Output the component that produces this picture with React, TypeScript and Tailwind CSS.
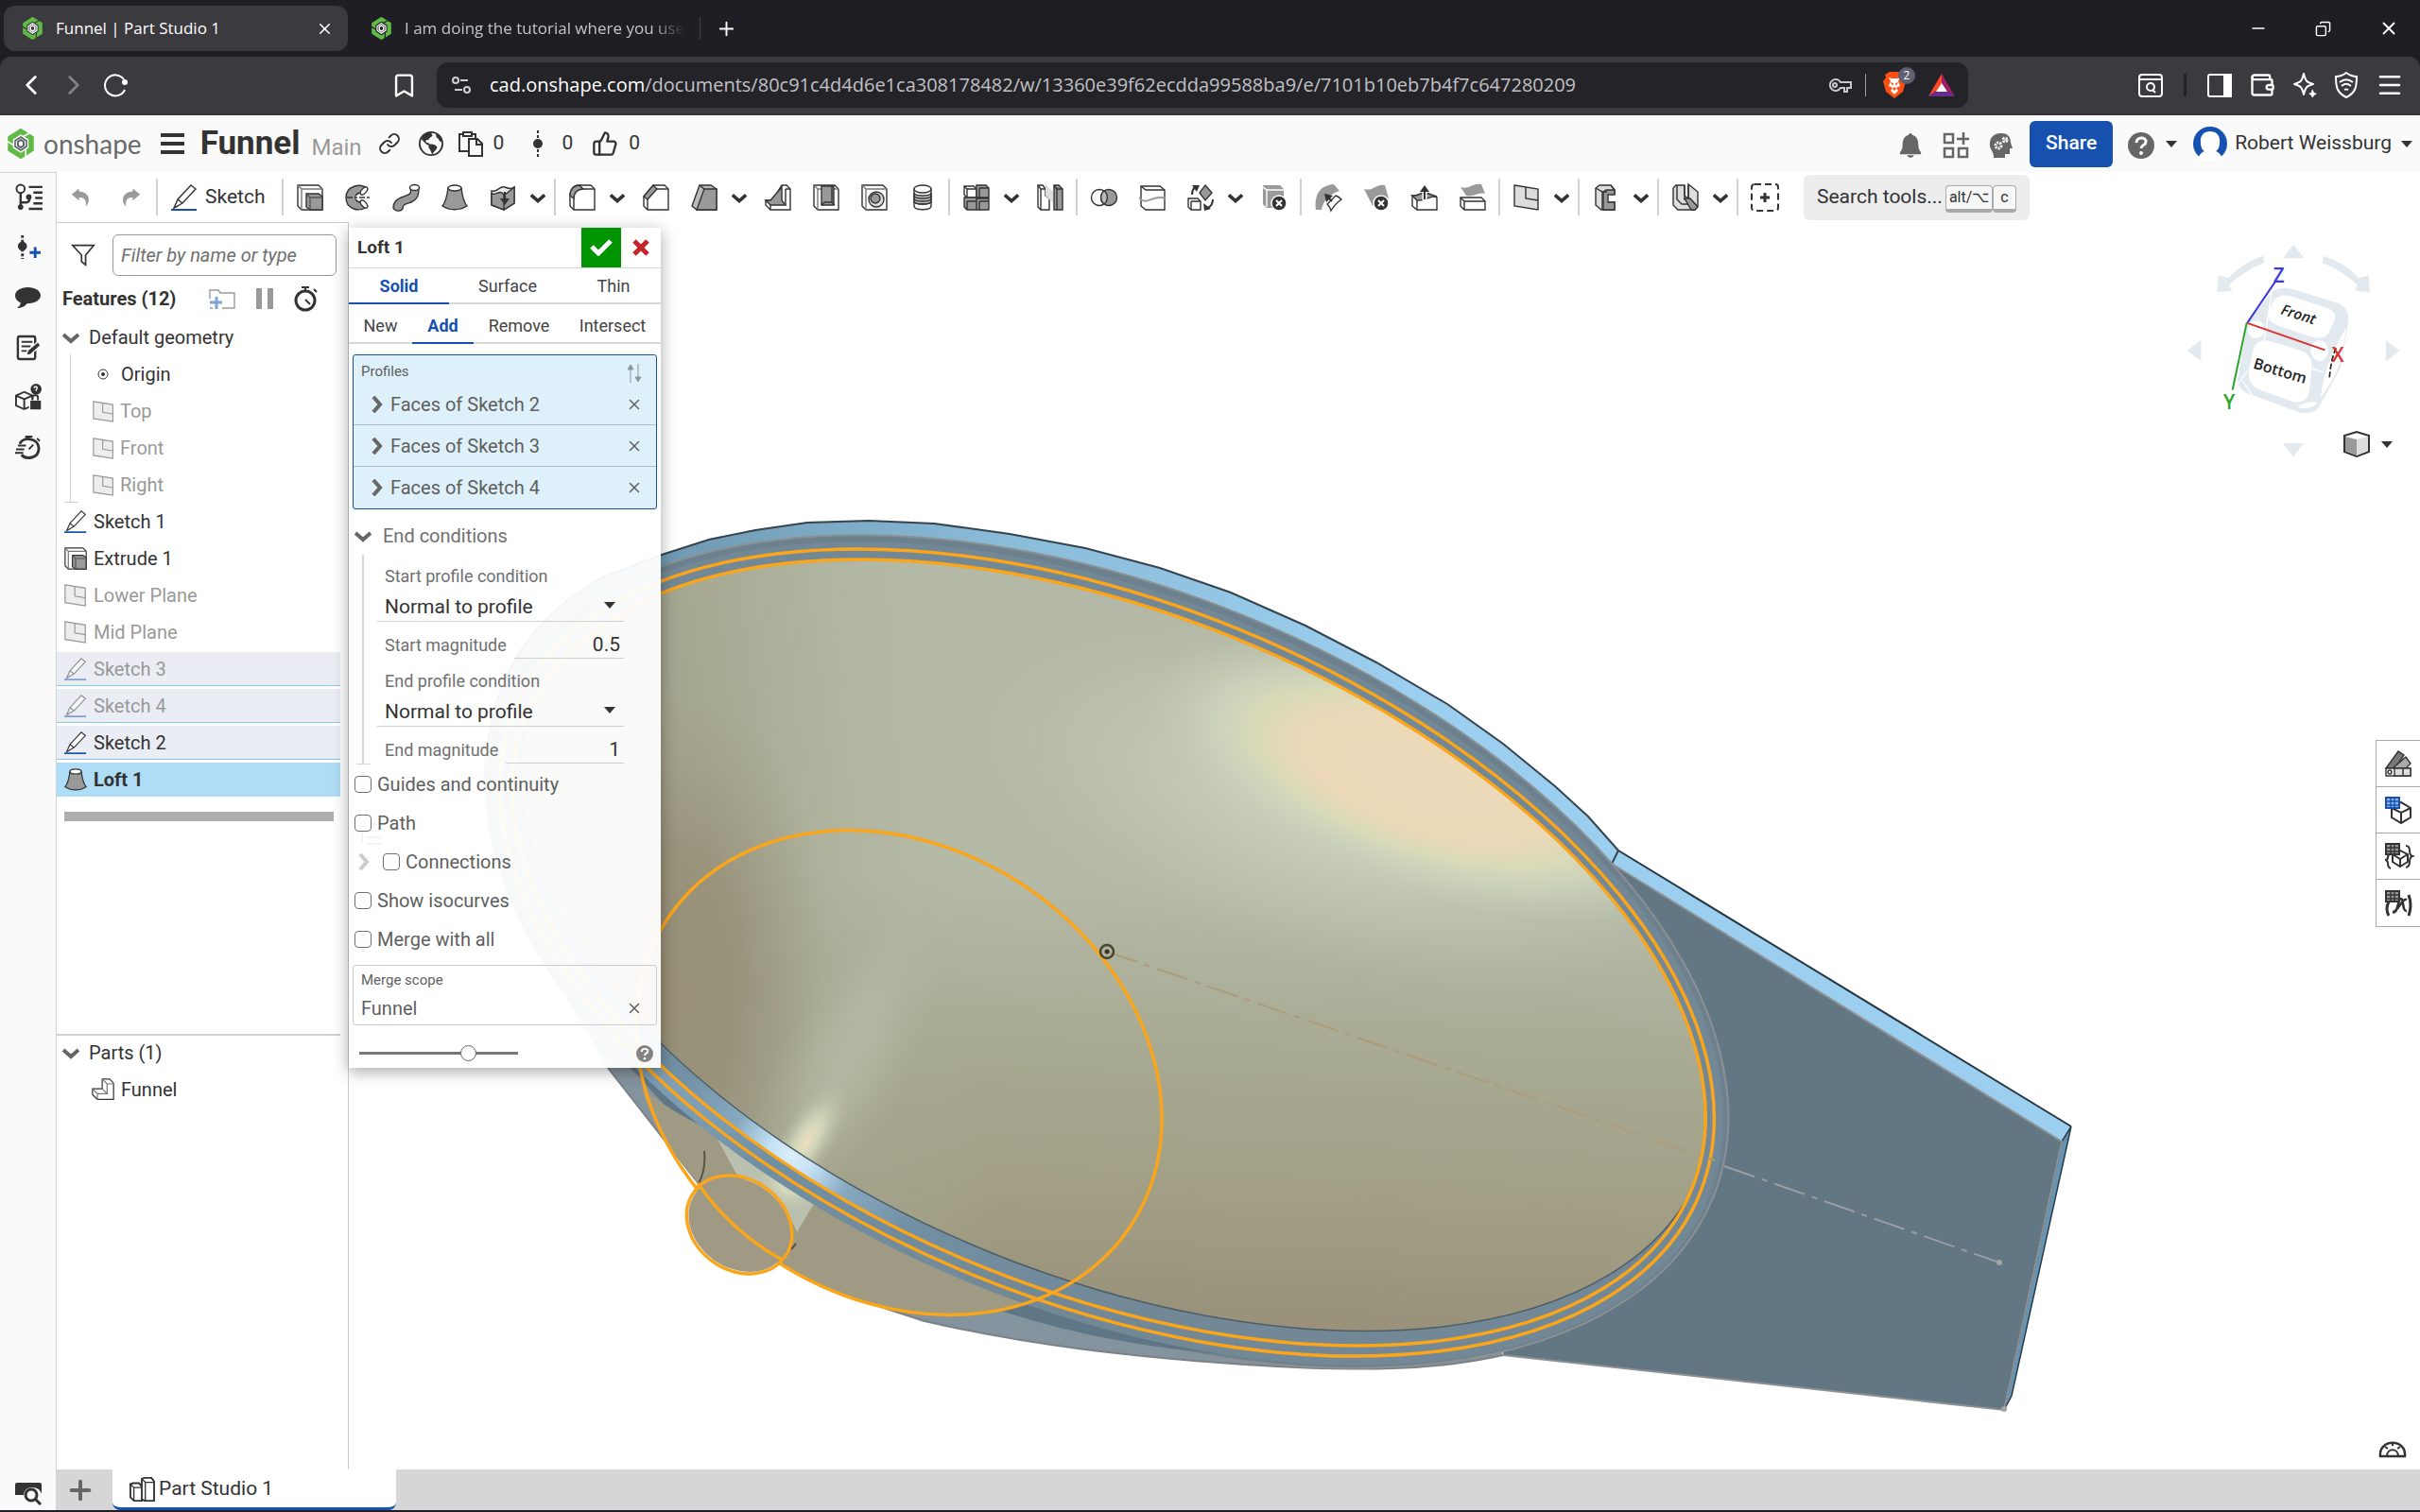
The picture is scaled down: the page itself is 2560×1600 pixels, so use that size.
import { useState, type ReactNode } from 'react';
import { Bookmark, ChevronLeft, ChevronRight, Copy, Link, Menu, Minus, Plus, ThumbsUp, Wallet, X } from 'lucide-react';

const INK = '#333333';
const GREY = '#9a9a9a';

const features = [
    { name: 'Sketch 1', icon: 'sketch' },
    { name: 'Extrude 1', icon: 'extrude' },
    { name: 'Lower Plane', icon: 'plane', hidden: true },
    { name: 'Mid Plane', icon: 'plane', hidden: true },
    { name: 'Sketch 3', icon: 'sketch', hidden: true, used: true },
    { name: 'Sketch 4', icon: 'sketch', hidden: true, used: true },
    { name: 'Sketch 2', icon: 'sketch', used: true },
    { name: 'Loft 1', icon: 'loft', active: true },
];

// Every glyph is drawn on a 28 x 28 grid
const glyphs: Record<string, ReactNode> = {
    undo: <path d="M11 2 1 10l10 8v-4c7 0 10 3 9 12 8-8 4-20-9-20z" fill={GREY} stroke="none" />,
    redo: <path d="m17 2 10 8-10 8v-4c-7 0-10 3-9 12C0 18 4 6 17 6z" fill={GREY} stroke="none" />,
    sketch: (
        <>
            <path d="m3 25 4-9L21 1l5 4-14 15zM7 16l5 4M3 25l4-2" fill="#fff" />
            <path d="M0 27h27" stroke="#1651b0" strokeWidth="2" />
        </>
    ),
    extrude: (
        <>
            <path d="M1 1h22l4 4v22H5l-4-4z" fill="#fff" />
            <path d="M5 5h22M5 5v22M1 1l4 4" stroke="#777" />
            <path d="M10 10h13l4 3v14H14l-4-3z" fill="#999" />
            <path d="M14 14h13M14 14v13M10 10l4 4" stroke="#555" />
        </>
    ),
    revolve: (
        <>
            <path d="M22 3C15-1 1 2 1 14s13 16 22 10l-4-6c-4 2-8 0-8-4s4-6 8-4z" fill="#999" />
            <ellipse cx="20" cy="7" rx="5" ry="2.500" transform="rotate(-50 20 7)" fill="#fff" />
            <ellipse cx="20" cy="21" rx="5" ry="2.500" transform="rotate(50 20 21)" fill="#fff" />
            <path d="M11 14h17" stroke="#fff" strokeWidth="3" />
            <path d="M2 14h26" strokeDasharray="6 2 3 2" />
        </>
    ),
    sweep: (
        <>
            <path d="M18 4c2 6-1 7-7 9C4 15 0 18 0 25c2 4 8 4 10 1 0-5 3-5 9-7 6-3 8-6 8-15z" fill="#999" />
            <ellipse cx="22.500" cy="3.500" rx="5" ry="3" fill="#fff" />
        </>
    ),
    loft: (
        <>
            <path d="M7 4c-1 8-2 14-6 19 8 5 18 5 26 0-4-5-5-11-6-19z" fill="#999" />
            <ellipse cx="14" cy="4" rx="7" ry="3" fill="#fff" />
        </>
    ),
    thicken: (
        <>
            <path d="M2 7c6 2 9-6 14-4s7 2 10 0v17l-11 7L2 22z" fill="#ececec" />
            <path d="M2 10c5 2 9-5 13 1v16L2 22zM15 12l11-9v17l-11 7z" fill="#999" />
            <path d="M16 8v11" strokeWidth="2" />
            <path d="M11 15h10l-5 7z" fill={INK} stroke="none" />
        </>
    ),
    fillet: (
        <>
            <path d="M1 12C1 5 5 1 11 1h12l4 4v22H5l-4-4z" fill="#fff" />
            <path d="M1 12C1 5 5 1 11 1l4 4C9 5 5 9 5 15z" fill="#999" />
            <path d="M5 15v12M15 5h12" />
        </>
    ),
    chamfer: (
        <>
            <path d="M1 13 11 1h12l4 4v22H5l-4-4z" fill="#fff" />
            <path d="M1 13 11 1l4 4L5 16z" fill="#999" />
            <path d="M5 16v11M15 5h12" />
        </>
    ),
    draft: (
        <>
            <path d="M9 1h12l6 4v22H6l-5-4z" fill="#bbb" />
            <path d="M14 5h13v22H6z" fill="#999" />
            <path d="m9 1 5 4" />
        </>
    ),
    rib: (
        <>
            <path d="M18 1h5l4 4v22H6l-5-5v-5h7z" fill="#fff" />
            <path d="M18 3v14l4 5H6l-5-5h5z" fill="#999" />
            <path d="M22 5v17M6 22v5M22 5h5" />
        </>
    ),
    shell: (
        <>
            <path d="M1 1h22l4 4v22H5l-4-4z" fill="#fff" />
            <path d="M5 5v22M5 5h22M1 1l4 4" stroke="#777" />
            <path d="M9 2h13v20H9z" fill="#999" />
            <path d="M9 22l3-3h8l3 3M20 2v17" />
        </>
    ),
    hole: (
        <>
            <path d="M1 1h22l4 4v22H5l-4-4z" fill="#fff" />
            <path d="M5 5v22M5 5h22M1 1l4 4" stroke="#777" />
            <circle cx="16" cy="16" r="8" fill="#ddd" />
            <circle cx="15" cy="15" r="5" fill="#999" />
        </>
    ),
    thread: (
        <>
            <path d="M5 5v18c0 5 18 5 18 0V5z" fill="#fff" />
            <path d="M5 9c0 4 18 4 18 0v9c0 4-18 4-18 0z" fill="#bbb" />
            <path d="M5 12c0 4 18 4 18 0M5 15c0 4 18 4 18 0M5 18c0 4 18 4 18 0" />
            <ellipse cx="14" cy="5" rx="9" ry="4" fill="#fff" />
        </>
    ),
    pattern: (
        <>
            <path d="M1 2h10l3 3v9H4l-3-3z" fill="#fff" />
            <path d="M4 5h10M4 5v9M1 2l3 3" />
            <path d="M14 1h10l3 3v10H14zM1 14h13v13H4l-3-3zM14 15h13v12H14z" fill="#999" />
            <path d="M17 4h10M17 4v10M17 18h10M17 18v9M4 18h10M4 18v9" />
        </>
    ),
    mirror: (
        <>
            <path d="M1 1h5l3 4v7l4 3v12H4l-3-3z" fill="#fff" />
            <path d="M1 1l3 4h5M4 5v22" />
            <path d="M9 0l8 8v12l-8-8z" fill="#ddd" stroke="none" />
            <path d="M18 1h5l4 4v22h-9V13z" fill="#999" />
            <path d="M21 5h6M21 5v22M18 1l3 4" />
        </>
    ),
    boolean: (
        <>
            <circle cx="9" cy="14" r="8.500" fill="#fff" />
            <circle cx="19" cy="14" r="8.500" fill="#999" />
            <path d="M14 7a9 9 0 0 0 0 14 9 9 0 0 0 0-14z" fill="#bbb" />
        </>
    ),
    split: (
        <>
            <path d="M2 2h20l5 4v21H7l-5-4z" fill="#fff" />
            <path d="M2 2l5 4h20" />
            <path d="M0 14c8 10 14-4 28 1" stroke={GREY} strokeWidth="2" />
        </>
    ),
    transform: (
        <>
            <path d="M1 15h10l3 3v9H4l-3-3z" fill="#fff" />
            <path d="M4 18h10M4 18v9" />
            <path d="m19 1 7 8-7 8-6-8z" fill="#999" />
            <path d="M5 11c0-4 1-6 3-8" strokeWidth="2" />
            <path d="M5 1h8l-3 7zM17 20l1 8 7-2z" fill={INK} stroke="none" />
            <path d="M27 16c0 4-2 7-5 9" strokeWidth="2" />
        </>
    ),
    deletePart: (
        <>
            <path d="M2 1h18l4 4v20H6l-4-4z" fill={GREY} stroke="none" />
            <path d="M2 3l4 3h18M6 6v18" stroke="#fff" />
            <circle cx="19" cy="20" r="8" fill={INK} stroke="#fff" />
            <path d="m16 17 6 6M22 17l-6 6" stroke="#fff" strokeWidth="2" />
        </>
    ),
    modifyFillet: (
        <>
            <path d="M1 27C-1 10 6 1 20 0l6 7C16 10 9 17 7 27z" fill={GREY} stroke="none" />
            <path d="m13 21 9-9q3 1 6 4-7 5-11 12-1-4-4-7z" fill="#fff" stroke="#fff" strokeWidth="4" />
            <path d="m13 21 9-9q3 1 6 4-7 5-11 12-1-4-4-7z" fill="#fff" />
            <path d="m11 11 7 7" strokeWidth="2" />
            <path d="m10 10 9 2-7 7z" fill={INK} stroke="none" />
        </>
    ),
    deleteFace: (
        <>
            <path d="M1 5c9 3 13-6 22-4l4 14c-8-2-12 4-17 8z" fill={GREY} stroke="none" />
            <circle cx="19" cy="20" r="8" fill={INK} stroke="#fff" />
            <path d="m16 17 6 6M22 17l-6 6" stroke="#fff" strokeWidth="2" />
        </>
    ),
    moveFace: (
        <>
            <path d="M1 12c7 1 9-5 17-2l9 4v13H6l-5-4z" fill="#fff" />
            <path d="M1 12c7 1 9-5 17-2l9 3c-8-1-12 5-21 4z" fill="#999" />
            <path d="M6 17v10" />
            <path d="M14 17V6" stroke="#fff" strokeWidth="5" />
            <path d="M14 16V6" strokeWidth="2" />
            <path d="m14 1 5 7H9z" fill={INK} stroke="none" />
        </>
    ),
    replaceFace: (
        <>
            <path d="M1 14h22l4 4v9H5l-4-4z" fill="#fff" />
            <path d="M5 18h22M5 18v9M1 14l4 4" />
            <path d="M1 3c9 3 13-5 22-3l4 10c-8-2-13 4-20 2z" fill={GREY} stroke="none" />
        </>
    ),
    plane: (
        <>
            <path d="M1 1l25 4v22L1 23z" fill="#ddd" />
            <path d="M13 3v12l13 2" />
        </>
    ),
    frame: (
        <>
            <path d="M3 4l4-3h12l4 5v4h-8v9h8v8H9l-6-5z" fill="#ddd" />
            <path d="M11 8l3-2h9v5h-7v8h7v8H11z" fill="#999" />
            <path d="M3 4l7 4h5M19 1l4 5M10 8v18" />
        </>
    ),
    sheet: (
        <>
            <path d="M1 4l3-3h9v15l4 2V0l10 8v15l-3 4H6l-5-5z" fill="#ddd" />
            <path d="M5 1v15l5 5h14l-11-9M13 1v11M17 1v14l10 9" />
            <path d="M13 15l6 0 8 9-3 3h-4z" fill="#999" />
        </>
    ),
    custom: (
        <>
            <rect x="0" y="0" width="28" height="28" rx="3" strokeWidth="2" strokeDasharray="7 4" />
            <path d="M9 14h10M14 9v10" strokeWidth="3" />
        </>
    ),
    tree: (
        <>
            <circle cx="6" cy="5" r="4.500" strokeWidth="2" />
            <path d="M6 9v17M6 20h6q4 0 4-6M15 3h15M20 9h10M22 15h8M20 21h10M15 27h15" strokeWidth="2.500" />
            <circle cx="6" cy="25" r="3" fill={INK} stroke="none" />
            <circle cx="15" cy="14" r="3" fill={INK} stroke="none" />
        </>
    ),
    version: (
        <>
            <path d="M8 1v26" strokeWidth="3" strokeDasharray="3 2" />
            <circle cx="8" cy="13" r="5" fill={INK} stroke="none" />
            <path d="M16 20h12M22 14v12" stroke="#1651b0" strokeWidth="3" />
        </>
    ),
    comment: <path d="M14 3C6 3 0 7 0 12c0 4 3 7 6 8 0 3-2 4-4 6 5 0 9-2 11-5 9 0 15-4 15-9s-6-9-14-9z" fill={INK} stroke="none" />,
    notes: (
        <>
            <rect x="3" y="2" width="19" height="25" rx="2" strokeWidth="2.500" />
            <path d="M7 8h12M7 13h10M7 18h6" strokeWidth="2" />
            <path d="m12 23 2-6L25 8l3 4-11 10z" fill={INK} stroke="#fafafa" />
        </>
    ),
    boxLock: (
        <>
            <path d="m1 12 9-4 9 4v11l-9 4-9-4zM1 12l9 4 9-4M10 16v11" strokeWidth="2" />
            <circle cx="23" cy="5" r="6" fill={INK} stroke="none" />
            <path d="M21 4c0-3 4-2 3 0l-1 2v1" stroke="#fff" />
            <rect x="16" y="17" width="13" height="11" rx="1" fill={INK} stroke="#fafafa" />
            <path d="M19 17v-3c0-3 6-3 6 0v3" strokeWidth="2" />
        </>
    ),
    timer: (
        <>
            <path d="M5 10C9 1 26 4 26 15S12 28 7 22" strokeWidth="3" />
            <path d="M11 2h8M15 2v4M24 4l3 3M15 16l5-5" strokeWidth="2" />
            <path d="M3 12h9M1 16h9M0 20h9" strokeWidth="2" />
        </>
    ),
    stopwatch: (
        <>
            <circle cx="14" cy="16" r="10" strokeWidth="3" />
            <path d="M10 2h8M14 2v4M23 4l3 3M14 15l5 5" strokeWidth="2" />
        </>
    ),
    search: (
        <>
            <path d="M0 5q0-2 2-2h24q2 0 2 2v10q-2-7-10-7-8 0-9 8H0z" fill={INK} stroke="none" />
            <circle cx="17" cy="16" r="6" strokeWidth="3" />
            <path d="m21 20 6 6" strokeWidth="3" />
        </>
    ),
    folder: (
        <>
            <path d="M1 14V5h9l2 3h15v16H14M1 24h3" stroke={GREY} />
            <path d="M1 18h13M8 12v13" stroke="#7fa3d8" strokeWidth="3" />
        </>
    ),
    filter: <path d="M1 2h26L17 14v12l-5-4v-8z" strokeWidth="2" />,
    part: (
        <>
            <path d="M13 1h9l5 5v20H7l-6-6v-7h12z" fill="#fff" />
            <path d="M13 1l6 6h8M19 7v12M13 13l6 6H7l-6-6M7 19v7" stroke="#777" />
        </>
    ),
    studio: (
        <>
            <path d="M1 8l3-1h7l3 4v16H5l-4-4zM14 2l3-1h8l3 4v22H17l-3-2z" fill="#fff" strokeWidth="2" />
            <path d="M1 8l4 4h9M5 12v15M14 2l4 4h10M18 6v21" />
        </>
    ),
    swatch: (
        <>
            <path d="M1 19 14 1l6 4-10 15z" fill="#777" />
            <path d="M8 19 22 7l5 7-6 6z" fill="#aaa" />
            <path d="M1 19h26v8H1z" fill="#fff" />
            <path d="M10 19h9v8h-9zM19 19h8v8h-8z" fill="#ddd" />
            <circle cx="5" cy="23" r="2" />
        </>
    ),
    tableBox: (
        <>
            <path d="m7 12 10-6 10 6v10l-10 6-10-6zM7 12l10 5 10-5M17 17v11" strokeWidth="2" />
            <path d="M1 1h14v11H1z" fill="#8ab6ea" stroke="#1651b0" strokeWidth="2" />
            <path d="M1 5h14M1 9h14M6 1v11M10 1v11" stroke="#1651b0" />
        </>
    ),
    tableBraces: (
        <>
            <path d="m8 12 8-4 8 4v8l-8 5-8-5zM8 12l8 5 8-5M16 17v8" strokeWidth="2" />
            <path d="M6 12q-3 0-3 3t-3 3q3 0 3 4t3 5M22 3q4 0 4 5t3 6q-3 1-3 6t-4 6" strokeWidth="2" />
            <path d="M1 1h14v11H1z" fill="#999" stroke={INK} strokeWidth="2" />
            <path d="M1 5h14M1 9h14M6 1v11M10 1v11" />
        </>
    ),
    tableVar: (
        <>
            <path d="M4 12Q0 20 4 27M25 5q4 11 0 22" strokeWidth="3" />
            <path d="M8 23c6 3 5-14 9-14 3 0 1 14 6 13M23 10c-5-2-9 13-15 13" strokeWidth="2.500" />
            <path d="M1 1h14v11H1z" fill="#999" strokeWidth="2" />
            <path d="M1 5h14M1 9h14M6 1v11M10 1v11" />
        </>
    ),
    shaded: (
        <>
            <path d="m1 5 13-4 13 4v17l-13 5-13-5z" fill="#fff" strokeWidth="2" />
            <path d="m2 6 12 3v17L2 21z" fill="#999" stroke="none" />
            <path d="m26 6-12 3v17l12-5z" fill="#ddd" stroke="none" />
        </>
    ),
    measure: (
        <>
            <path d="M1 24C-1 5 29 5 27 24z" strokeWidth="2.500" />
            <path d="M8 24c0-9 12-9 12 0M14 10v3M6 14l3 2M22 14l-3 2" strokeWidth="2" />
        </>
    ),
    clipboard: (
        <>
            <path d="M12 22H2V4h17v4" strokeWidth="2" />
            <path d="M6 2h9v4H6z" fill="#fafafa" strokeWidth="2" />
            <path d="M12 9h9l5 5v13H12zM20 9v6h6" fill="#fafafa" strokeWidth="2" />
        </>
    ),
    commit: (
        <>
            <path d="M14 0v28" strokeWidth="2" strokeDasharray="3 2" />
            <circle cx="14" cy="14" r="5" fill={INK} stroke="none" />
        </>
    ),
    globe: (
        <>
            <circle cx="14" cy="14" r="13" strokeWidth="2" />
            <path d="M4 6c3-4 7-5 11-5-1 2 0 3 1 4-2 1-4 2-5 5-3-1-4 1-2 3 3 0 4 2 4 3-4 0-6-3-8-5-2-1-2-3-1-5zM12 15c3-1 7 0 9 3-1 4-4 4-5 8-2 0-2-5-4-6-1-2-1-4 0-5zM20 2c5 3 7 6 6 10-2 0-3-2-4-4-2 0-3-3-2-6z" fill={INK} stroke="none" />
        </>
    ),
    bell: <path d="M12 2q0-2 2-2t2 2c6 2 7 7 7 12 0 4 1 5 3 8v2H2v-2c2-3 3-4 3-8 0-5 1-10 7-12zM10 25h8q-1 3-4 3t-4-3z" fill="#666" stroke="none" />,
    appPlus: <path d="M2 2h9v9H2zM2 17h9v9H2zM17 17h9v9h-9zM15 7h13M22 0v13" stroke="#666" strokeWidth="2.500" />,
    learning: (
        <>
            <path d="M14 1C5 1 1 7 2 14c0 4 4 6 4 13h12v-4h5v-6h3l-2-6C24 4 20 1 14 1z" fill="#666" stroke="none" />
            <circle cx="11" cy="14" r="3" stroke="#fafafa" strokeWidth="3" strokeDasharray="2 1" />
            <circle cx="18" cy="8" r="2" stroke="#fafafa" strokeWidth="3" strokeDasharray="2 1" />
        </>
    ),
    help: (
        <>
            <circle cx="14" cy="14" r="14" fill="#666" stroke="none" />
            <path d="M9 11c0-7 11-6 10-1 0 4-5 3-5 7" stroke="#fff" strokeWidth="3" />
            <circle cx="14" cy="22" r="2" fill="#fff" stroke="none" />
        </>
    ),
    list: <path d="M4 4v20M9 4h15M9 11h15M9 18h15M9 25h15" strokeWidth="2" />,
};

function Glyph({ name, className = 'size-7' }: { name: string; className?: string }) {
    return (
        <svg viewBox="0 0 28 28" fill="none" stroke={INK} strokeWidth="1.400" className={`shrink-0 overflow-visible ${className}`} aria-hidden="true">
            {glyphs[name]}
        </svg>
    );
}

function Logo({ className, core = '#5f6368', gap = '#fafafa' }: { className?: string; core?: string; gap?: string }) {
    return (
        <svg viewBox="0 0 28 32" fill="none" className={`shrink-0 ${className}`} aria-hidden="true">
            <path d="M14 3 25 10v12l-11 7-11-7V10z" stroke="#5fba46" strokeWidth="5.500" />
            <g stroke={gap} strokeWidth="1.600">
                <path d="M23 5 10 12" />
                <path d="M23 5 10 12" transform="rotate(120 14 16)" />
                <path d="M23 5 10 12" transform="rotate(240 14 16)" />
            </g>
            <path d="m14 9 6 4v6l-6 4-6-4v-6z" stroke={core} strokeWidth="1.600" />
            <path d="m14 12 3 2v4l-3 2-3-2v-4z" stroke={core} strokeWidth="2" />
        </svg>
    );
}

function Caret({ className = '' }: { className?: string }) {
    return (
        <svg viewBox="0 0 12 7" className={`h-[7px] w-3 shrink-0 ${className}`} aria-hidden="true">
            <path d="M0 0h12L6 7z" fill={INK} />
        </svg>
    );
}

function Chevron({ color = '#666', className = '' }: { color?: string; className?: string }) {
    return (
        <svg viewBox="0 0 18 18" fill="none" stroke={color} strokeWidth="4" className={`shrink-0 ${className}`} aria-hidden="true">
            <path d="m1 6 8 7 8-7" />
        </svg>
    );
}

function Tool({ name, menu }: { name: string; menu?: boolean }) {
    return (
        <div className="flex items-center">
            <button aria-label={name} className="flex w-[51px] justify-center">
                <Glyph name={name} />
            </button>
            {menu && (
                <button aria-label={`${name} menu`} className="w-[27px] pl-1">
                    <Chevron color={INK} className="size-4" />
                </button>
            )}
        </div>
    );
}

const Sep = () => <div className="mx-[2px] h-[39px] w-[2px] bg-[#d2d2d2]" />;

function BrowserChrome() {
    return (
        <div className="bg-[#1f1e24] font-['Open_Sans',sans-serif] text-white">
            <div className="flex h-[60px] items-center pl-1">
                <div className="flex h-12 w-[364px] items-center rounded-xl bg-[#3b3a3f] pr-[15px] pl-5">
                    <Logo className="h-6 w-[21px]" core="#ffffff" gap="#3b3a3f" />
                    <span className="ml-[14px] flex-1 text-[17px]">Funnel | Part Studio 1</span>
                    <button aria-label="Close tab"><X size={19} strokeWidth={2} /></button>
                </div>
                <div className="flex w-[372px] items-center pl-[25px]">
                    <Logo className="h-6 w-[21px]" core="#ffffff" gap="#1f1e24" />
                    <span className="ml-[14px] text-[17px] whitespace-nowrap text-[#c4c4c8] [mask-image:linear-gradient(to_right,black_88%,transparent)]">
                        I am doing the tutorial where you use
                    </span>
                </div>
                <div className="h-6 w-px bg-[#45444a]" />
                <button aria-label="New tab" className="ml-4"><Plus size={23} strokeWidth={2} /></button>
                <div className="ml-auto flex items-center gap-[50px] pr-[22px]">
                    <button aria-label="Minimize"><Minus size={20} /></button>
                    <button aria-label="Restore"><Copy size={17} className="-scale-x-100" /></button>
                    <button aria-label="Close"><X size={22} strokeWidth={2} /></button>
                </div>
            </div>
            <div className="flex h-[62px] items-center rounded-t-xl border-b-2 border-[#343338] bg-[#3b3a3f]">
                <div className="flex w-[462px] items-center pl-4">
                    <button aria-label="Back"><ChevronLeft size={34} strokeWidth={2} /></button>
                    <button aria-label="Forward" className="ml-[11px] text-[#828187]"><ChevronRight size={34} strokeWidth={2} /></button>
                    <button aria-label="Reload" className="ml-[13px]">
                        <svg viewBox="0 0 28 28" className="size-7" fill="none" stroke="white" strokeWidth="2">
                            <path d="M23 8A11 11 0 1 0 24 19" />
                            <circle cx="24" cy="11" r="3" fill="white" stroke="none" />
                        </svg>
                    </button>
                    <button aria-label="Bookmark" className="mr-5 ml-auto"><Bookmark size={29} strokeWidth={2} /></button>
                </div>
                <div className="flex h-12 flex-1 items-center rounded-xl bg-[#242328] pr-[14px] pl-4">
                    <svg viewBox="0 0 20 18" className="h-[18px] w-5" fill="none" stroke="#d0d0d4" strokeWidth="2">
                        <circle cx="4" cy="4" r="3" />
                        <circle cx="16" cy="14" r="3" />
                        <path d="M9 4h8M3 14h8" />
                    </svg>
                    <span className="ml-5 flex-1 text-[20px] whitespace-nowrap text-[#c0c0c5]">
                        <span className="text-white">cad.onshape.com</span>
                        /documents/80c91c4d4d6e1ca308178482/w/13360e39f62ecdda99588ba9/e/7101b10eb7b4f7c647280209
                    </span>
                    <svg viewBox="0 0 25 16" className="h-4 w-[25px]" fill="none" stroke="#c8c8cc" strokeWidth="2">
                        <path d="M13 5a6 6 0 1 0 0 6h4v4h3v-4h4V5z" />
                        <circle cx="7" cy="8" r="2" />
                    </svg>
                    <div className="mx-[14px] h-6 w-px bg-[#a0a0a4]" />
                    <div className="relative mx-1">
                        <svg viewBox="0 0 24 28" className="h-7 w-6">
                            <path d="m7 0-5 3 1 3-3 4 3 11 9 7 9-7 3-11-3-4 1-3-5-3z" fill="#fb5010" />
                            <path d="m6 6 2 4-2 5 4 2-2 3 4 4 4-4-2-3 4-2-2-5 2-4-3 1H9z" fill="#fff" />
                            <path d="m8 11 3 1-1 3zM16 11l-3 1 1 3zM12 16l2 2-2 2-2-2z" fill="#fb5010" />
                        </svg>
                        <span className="absolute -top-[5px] -right-[10px] flex size-[18px] items-center justify-center rounded-full bg-[#5f6072] text-[12px]">2</span>
                    </div>
                    <svg viewBox="0 0 28 24" className="ml-5 h-6 w-7">
                        <path d="M14 0 0 24l14-10z" fill="#ff4724" />
                        <path d="m14 0 14 24-14-10z" fill="#9e1f63" />
                        <path d="M0 24h28L20 18H8z" fill="#662d91" />
                        <path d="m14 10 6 9H8z" fill="#fff" />
                    </svg>
                </div>
                <div className="flex w-[478px] items-center justify-end gap-[18px] pr-[17px]">
                    <svg viewBox="0 0 26 26" className="size-[26px]" fill="none" stroke="white" strokeWidth="2">
                        <rect x="1" y="2" width="24" height="23" rx="3" />
                        <path d="M1 7h24M15 18l3 3" />
                        <circle cx="13" cy="15" r="4" />
                    </svg>
                    <div className="mx-1 h-6 w-[3px] bg-[#242328]" />
                    <svg viewBox="0 0 26 26" className="size-[26px]" fill="none" stroke="white" strokeWidth="2">
                        <rect x="1" y="2" width="24" height="23" rx="2" />
                        <path d="M18 2h7v23h-7z" fill="white" />
                    </svg>
                    <Wallet size={28} strokeWidth={2} />
                    <svg viewBox="0 0 26 26" className="size-[26px]" fill="none" stroke="white" strokeWidth="2" strokeLinejoin="round">
                        <path d="M12 1c2 8 3 9 10 11-7 2-8 3-10 11-2-8-3-9-10-11C9 10 10 9 12 1z" />
                        <path d="M21 17l2 4 3 1-3 2-2 3-1-3-3-2 3-1z" fill="white" stroke="none" />
                    </svg>
                    <svg viewBox="0 0 26 28" className="h-7 w-[26px]" fill="none" stroke="white" strokeWidth="2">
                        <path d="M13 1c4 3 7 4 11 4 0 11-1 17-11 22C3 22 2 16 2 5c4 0 7-1 11-4z" />
                        <path d="M6 11c5-4 9-4 14 0M8 15c4-3 6-3 10 0M11 19c2-1 2-1 4 0" />
                    </svg>
                    <button aria-label="Browser menu"><Menu size={30} strokeWidth={2} /></button>
                </div>
            </div>
        </div>
    );
}

function DocHeader() {
    return (
        <header className="flex h-[60px] items-center bg-[#fafafa] pr-2 pl-2 text-[21px]">
            <Logo className="h-8 w-7" />
            <span className="ml-[10px] font-['Lato',sans-serif] text-[28px] text-[#6a6a6a]">onshape</span>
            <button aria-label="Menu" className="ml-5 flex w-[25px] flex-col gap-[5px]">
                <span className="h-1 w-full bg-[#333]" />
                <span className="h-1 w-full bg-[#333]" />
                <span className="h-1 w-full bg-[#333]" />
            </button>
            <h1 className="ml-[17px] text-[35px] font-bold">Funnel</h1>
            <span className="mt-[7px] ml-3 text-[24px] text-[#9a9a9a]">Main</span>
            <div className="ml-[17px] flex items-center">
                <Link size={24} color={INK} strokeWidth={2} />
                <Glyph name="globe" className="ml-[19px] size-[26px]" />
                <Glyph name="clipboard" className="ml-[15px] size-7" />
                <span className="ml-[10px]">0</span>
                <Glyph name="commit" className="ml-[22px] size-7" />
                <span className="ml-[11px]">0</span>
                <ThumbsUp size={28} strokeWidth={2} color={INK} className="ml-5" />
                <span className="ml-[11px]">0</span>
            </div>
            <div className="ml-auto flex items-center">
                <Glyph name="bell" className="mt-1 size-[26px]" />
                <Glyph name="appPlus" className="mt-1 ml-[21px] size-7" />
                <Glyph name="learning" className="mt-1 ml-5 size-7" />
                <button className="ml-4 h-[49px] w-[88px] rounded-md bg-[#1651b0] text-[21px] font-medium text-white">Share</button>
                <Glyph name="help" className="mt-1 ml-4 size-7" />
                <Caret className="ml-3" />
                <svg viewBox="0 0 36 36" className="ml-[17px] size-9">
                    <circle cx="18" cy="18" r="18" fill="#1651b0" />
                    <path d="M18 5c-7 0-11 5-10 12 0 5 2 8 4 9-3 1-6 4-7 8 8 6 18 6 26 0-1-4-4-7-7-8 2-1 4-4 4-9 1-7-3-12-10-12z" fill="#fff" />
                </svg>
                <span className="ml-2">Robert Weissburg</span>
                <Caret className="ml-[10px]" />
            </div>
        </header>
    );
}

function Toolbar() {
    return (
        <div className="flex h-[53px] items-center bg-white">
            <button aria-label="Undo" className="flex w-[52px] justify-center"><Glyph name="undo" className="size-[22px]" /></button>
            <button aria-label="Redo" className="flex w-[51px] justify-center"><Glyph name="redo" className="size-[22px]" /></button>
            <Sep />
            <button className="flex w-[127px] items-center gap-2 pl-3 text-[21px]">
                <Glyph name="sketch" />
                Sketch
            </button>
            <Sep />
            <Tool name="extrude" />
            <Tool name="revolve" />
            <Tool name="sweep" />
            <Tool name="loft" />
            <Tool name="thicken" menu />
            <Sep />
            <Tool name="fillet" menu />
            <Tool name="chamfer" />
            <Tool name="draft" menu />
            <Tool name="rib" />
            <Tool name="shell" />
            <Tool name="hole" />
            <Tool name="thread" />
            <Sep />
            <Tool name="pattern" menu />
            <Tool name="mirror" />
            <Sep />
            <Tool name="boolean" />
            <Tool name="split" />
            <Tool name="transform" menu />
            <Tool name="deletePart" />
            <Sep />
            <Tool name="modifyFillet" />
            <Tool name="deleteFace" />
            <Tool name="moveFace" />
            <Tool name="replaceFace" />
            <Sep />
            <Tool name="plane" menu />
            <Sep />
            <Tool name="frame" menu />
            <Sep />
            <Tool name="sheet" menu />
            <Sep />
            <Tool name="custom" />
            <button className="ml-4 flex h-12 items-center rounded-md bg-[#ededed] px-[14px] text-[21px] whitespace-nowrap">
                <span className="mr-[3px]">Search tools...</span>
                <kbd className="mt-1 rounded-sm border border-b-4 border-[#aaa] bg-[#f7f7f7] px-[3px] font-[inherit] text-[16px] leading-6">alt/⌥</kbd>
                <kbd className="mt-1 rounded-sm border border-b-4 border-[#aaa] bg-[#f7f7f7] px-[7px] font-[inherit] text-[16px] leading-6">c</kbd>
            </button>
        </div>
    );
}

function FeaturePanel() {
    return (
        <aside className="flex w-[309px] shrink-0 flex-col border-t border-r border-[#ccc] bg-white">
            <div className="flex h-[858px] flex-col">
                <div className="flex items-center gap-[19px] pt-3 pr-3 pl-4">
                    <Glyph name="filter" className="size-6" />
                    <input aria-label="Filter" placeholder="Filter by name or type" className="h-11 w-[237px] rounded-md border border-[#999] px-2 text-[20px] italic placeholder:text-[#707070]" />
                </div>
                <div className="flex h-[47px] items-center pt-px pr-[31px] pl-[6px]">
                    <h2 className="flex-1 text-[20px] font-bold">Features (12)</h2>
                    <button aria-label="Add folder"><Glyph name="folder" className="size-7" /></button>
                    <button aria-label="Suspend" className="mr-5 ml-[22px] flex gap-[6px]">
                        <span className="h-[22px] w-[6px] bg-[#999]" />
                        <span className="h-[22px] w-[6px] bg-[#999]" />
                    </button>
                    <button aria-label="Regeneration times"><Glyph name="stopwatch" className="size-7" /></button>
                </div>
                <div className="flex h-9 items-center gap-[10px] pl-[6px] text-[20px]">
                    <Chevron className="size-[18px]" />
                    Default geometry
                </div>
                <div className="ml-[14px] border-l border-[#ccc]">
                    <ul>
                        <li className="mt-[3px] flex h-9 items-center gap-[9px] pl-6 text-[20px]">
                            <svg viewBox="0 0 20 20" className="size-5" fill="none" stroke={INK}>
                                <circle cx="10" cy="10" r="5" />
                                <circle cx="10" cy="10" r="2" fill={INK} stroke="none" />
                            </svg>
                            Origin
                        </li>
                        {['Top', 'Front', 'Right'].map((name) => (
                            <li key={name} className="mt-[3px] flex h-9 items-center gap-[6px] pl-[23px] text-[20px] text-[#999]">
                                <Glyph name="plane" className="size-[23px] opacity-50" />
                                {name}
                            </li>
                        ))}
                    </ul>
                    <div className="-ml-[7px] h-px w-[14px] bg-[#ccc]" />
                </div>
                <ul className="-mt-px mr-2">
                    {features.map((f) => (
                        <li
                            key={f.name}
                            className={`mt-[3px] flex h-9 items-center gap-[7px] pl-2 text-[20px] ${f.hidden ? 'text-[#999]' : ''} ${f.used ? 'border-b border-[#8cc8ea] bg-[#eaeef4]' : ''} ${f.active ? 'bg-[#b0ddf6] font-bold' : ''}`}
                        >
                            <Glyph name={f.icon} className={f.hidden ? 'size-6 opacity-50' : 'size-6'} />
                            {f.name}
                        </li>
                    ))}
                </ul>
                <div className="mt-4 mr-[15px] ml-2 h-[10px] bg-[#adadad]" />
            </div>
            <div className="mr-2 flex h-[38px] items-center gap-[10px] border-t-2 border-[#d2d2d2] pl-[6px] text-[20px]">
                <Chevron className="size-[18px]" />
                Parts (1)
            </div>
            <div className="mt-[3px] flex h-9 items-center gap-[7px] pl-[37px] text-[20px]">
                <Glyph name="part" className="size-6" />
                Funnel
            </div>
        </aside>
    );
}

function Scene() {
    return (
        <svg viewBox="369 235 2191 1319" preserveAspectRatio="xMinYMin meet" className="block size-full" fill="none" aria-hidden="true">
            <defs>
                <linearGradient id="bowl" gradientUnits="userSpaceOnUse" x1="1180" y1="590" x2="1150" y2="1400">
                    <stop offset="0" stopColor="#b3b9a6" />
                    <stop offset="0.420" stopColor="#b5baa6" />
                    <stop offset="0.620" stopColor="#a9ab94" />
                    <stop offset="0.820" stopColor="#a29f86" />
                    <stop offset="1" stopColor="#99917a" />
                </linearGradient>
                <linearGradient id="bowlSide" gradientUnits="userSpaceOnUse" x1="690" y1="900" x2="1000" y2="860">
                    <stop offset="0" stopColor="#9c9a82" stopOpacity="0.800" />
                    <stop offset="0.400" stopColor="#a3a48c" stopOpacity="0.600" />
                    <stop offset="1" stopColor="#adb099" stopOpacity="0" />
                </linearGradient>
                <radialGradient id="bowlDark">
                    <stop offset="0" stopColor="#978f76" />
                    <stop offset="0.500" stopColor="#98917a" stopOpacity="0.850" />
                    <stop offset="1" stopColor="#a09d86" stopOpacity="0" />
                </radialGradient>
                <radialGradient id="rim" gradientUnits="userSpaceOnUse" cx="838" cy="1222" r="420">
                    <stop offset="0" stopColor="#dceefa" />
                    <stop offset="0.060" stopColor="#c4e1f4" />
                    <stop offset="0.160" stopColor="#86a9c0" />
                    <stop offset="0.350" stopColor="#718fa3" />
                    <stop offset="1" stopColor="#738896" />
                </radialGradient>
                <linearGradient id="edge" gradientUnits="userSpaceOnUse" x1="600" y1="600" x2="1500" y2="700">
                    <stop offset="0" stopColor="#6990a8" />
                    <stop offset="0.500" stopColor="#8abbd8" />
                    <stop offset="1" stopColor="#9ccfef" />
                </linearGradient>
                <radialGradient id="shine">
                    <stop offset="0" stopColor="#ecd9b9" />
                    <stop offset="0.450" stopColor="#ebd9b8" />
                    <stop offset="0.620" stopColor="#d8dab8" />
                    <stop offset="0.760" stopColor="#ced3bb" stopOpacity="0.800" />
                    <stop offset="1" stopColor="#c4c9b6" stopOpacity="0" />
                </radialGradient>
                <radialGradient id="glow">
                    <stop offset="0" stopColor="#cfd4c2" />
                    <stop offset="0.400" stopColor="#c8cdba" stopOpacity="0.800" />
                    <stop offset="1" stopColor="#bcc1ae" stopOpacity="0" />
                </radialGradient>
                <radialGradient id="neck">
                    <stop offset="0" stopColor="#eddfc0" />
                    <stop offset="0.350" stopColor="#d5dabd" stopOpacity="0.900" />
                    <stop offset="1" stopColor="#b9bda8" stopOpacity="0" />
                </radialGradient>
                <clipPath id="mouth">
                    <ellipse cx="1173" cy="1008" rx="665" ry="358" transform="rotate(22.100 1173 1008)" />
                </clipPath>
                <clipPath id="inside">
                    <ellipse cx="1181" cy="993" rx="665" ry="358" transform="rotate(22.100 1181 993)" />
                </clipPath>
            </defs>

            {/* handle */}
            <path d="M1712 900 2191 1192 2128 1477 2120 1492 1590 1434 1600 1000z" fill="#627684" />
            <path d="M1712 900 2191 1192 2181 1208 1705 914z" fill="#9ccfef" />
            <path d="M2191 1192 2128 1477 2120 1492 2181 1208z" fill="#6695b3" stroke="#2b3c48" strokeWidth="1.500" />
            <path d="M1712 900 2191 1192" stroke="#263641" strokeWidth="2" />
            <path d="M1705 914 2181 1208 2120 1492 1590 1434" stroke="#8d9194" strokeWidth="2" />

            {/* outer body */}
            <path
                d="M513 830C516 910 580 1025 643 1130L740 1254 829 1338C880 1368 929 1382 978 1398 1090 1424 1200 1436 1317 1444 1440 1452 1520 1450 1590 1434L1400 1000z"
                fill="#84949f"
            />
            <path
                d="M513 830C513 740 545 660 640 610L700 587 750 571 799 561 854 553 919 551 988 554 1068 565 1148 580 1227 601 1302 627 1381 662 1456 701 1531 745 1590 787 1645 832 1680 864 1712 900 1705 914 1400 1000z"
                fill="url(#edge)"
            />
            <path
                d="M513 830C513 740 545 660 640 610L700 587 750 571 799 561 854 553 919 551 988 554 1068 565 1148 580 1227 601 1302 627 1381 662 1456 701 1531 745 1590 787 1645 832 1680 864 1712 900 1705 914"
                stroke="#35444e"
                strokeWidth="2"
            />
            <path d="M643 1130 740 1254M829 1338C880 1368 929 1382 978 1398 1090 1424 1200 1436 1317 1444 1440 1452 1520 1450 1590 1434" stroke="#7c8186" strokeWidth="2" />

            {/* rim */}
            <ellipse cx="1171" cy="1007" rx="692" ry="384" transform="rotate(22.040 1171 1007)" fill="#6d808d" stroke="#8b9093" strokeWidth="2" />
            <path d="M560 960C640 1130 760 1240 900 1320 1060 1400 1190 1436 1436 1440L1180 1300 760 1090z" fill="#5f7686" />

            {/* loft preview seen past the rim */}
            <path d="M678 1150C690 1190 715 1225 740 1254L772 1244 837 1304 829 1338C880 1375 950 1392 1003 1390 1060 1390 1090 1380 1118 1368 1080 1350 1020 1345 960 1310 900 1285 870 1260 825 1230 780 1210 710 1180 678 1150z" fill="#9f9a83" />
            <path d="M756 1200C800 1212 840 1236 868 1262L843 1304 830 1275 780 1244z" fill="#b9c0ae" />
            <ellipse cx="838" cy="1250" rx="42" ry="36" fill="url(#neck)" />

            <ellipse cx="1172" cy="1009" rx="675" ry="367" transform="rotate(22.170 1172 1009)" stroke="url(#rim)" strokeWidth="22" />
            <g clipPath="url(#mouth)">
                <rect x="500" y="560" width="1340" height="900" fill="url(#rim)" />
                <g clipPath="url(#inside)">
                    <path d="M500 500h1400v960H500z" fill="url(#bowl)" />
                    <path d="M400 500h700v960H400z" fill="url(#bowlSide)" />
                    <ellipse cx="700" cy="1060" rx="170" ry="330" transform="rotate(6 700 1060)" fill="url(#bowlDark)" />
                    <ellipse cx="1430" cy="850" rx="420" ry="180" transform="rotate(14 1430 850)" fill="url(#glow)" />
                    <ellipse cx="1510" cy="824" rx="310" ry="124" transform="rotate(18 1510 824)" fill="url(#shine)" />
                    <ellipse cx="890" cy="1130" rx="190" ry="70" transform="rotate(-64 890 1130)" fill="url(#glow)" opacity="0.350" />
                    <ellipse cx="853" cy="1208" rx="75" ry="28" transform="rotate(-58 853 1208)" fill="url(#neck)" />
                </g>
                <ellipse cx="1181" cy="993" rx="665" ry="358" transform="rotate(22.100 1181 993)" stroke="#4d5d66" strokeWidth="1.500" />
            </g>
            <path d="M745 1218Q747 1238 739 1252M837 1322l5-6" stroke="#5b5140" strokeWidth="2" />

            {/* sketch outlines */}
            <g stroke="#faa51a" strokeWidth="3.500">
                <ellipse cx="1171" cy="1008" rx="677" ry="369.500" transform="rotate(22.170 1171 1008)" />
                <ellipse cx="1173" cy="1008" rx="665.500" ry="358.500" transform="rotate(22.100 1173 1008)" />
                <ellipse cx="951" cy="1135" rx="294" ry="238" transform="rotate(33.500 951 1135)" />
                <ellipse cx="782" cy="1296" rx="59" ry="48" transform="rotate(35 782 1296)" />
            </g>
            <ellipse cx="782" cy="1296" rx="57" ry="46" transform="rotate(35 782 1296)" fill="#a09a84" />
            <path d="M738 1252Q775 1305 829 1334" stroke="#faa51a" strokeWidth="3.500" />

            {/* centre line and origin */}
            <path d="M1171 1007 1814 1228" stroke="#ac9c7a" strokeWidth="2" strokeDasharray="34 8 6 8" />
            <path d="M1824 1234 2115 1336" stroke="#9a9ea0" strokeWidth="2" strokeDasharray="34 8 6 8" />
            <circle cx="2115" cy="1336" r="3" fill="#a3a3a3" />
            <circle cx="2120" cy="1491" r="3" fill="#a3a3a3" />
            <circle cx="1171" cy="1007" r="7" stroke="#4a4434" strokeWidth="2.500" />
            <circle cx="1171" cy="1007" r="2.500" fill="#3b3526" />
        </svg>
    );
}

function ViewCube() {
    return (
        <svg viewBox="0 0 840 600" className="h-[200px] w-[280px] overflow-visible font-['Open_Sans',sans-serif]" fill="none" aria-label="View cube">
            <g fill="#e2e9ef">
                <path d="m438 56 34 44h-67zM101 393l44-33v67zM775 393l-43-33v67zM438 730l-33-43h66z" />
                <path d="M342 92q-62 20-110 70l-32-7-4 53 48-5-10-17q45-46 112-72zM534 92q65 20 112 70l32-7 2 53-48-5 10-17q-45-46-112-72z" />
                <path d="M372 205q28-18 70-5l140 43q36 18 30 62l-25 145-70 125q-14 20-58 15l-168-62q-30-15-30-40l30-183z" />
            </g>
            <g fill="#fff">
                <path d="M378 232q18-20 50-12l118 38q32 12 22 40l-18 40q-14 20-46 14l-120-40q-32-14-26-44z" />
                <path d="M312 385q14-32 52-22l98 30q40 14 34 60l-8 72q-8 36-46 32l-106-38q-44-16-40-60z" />
                <ellipse cx="320" cy="326" rx="26" ry="28" />
                <ellipse cx="521" cy="393" rx="28" ry="33" />
                <path d="M606 320q-14 110-40 158l-42 68q10-110 82-226z" />
                <ellipse cx="484" cy="566" rx="30" ry="9" transform="rotate(-12 484 566)" />
            </g>
            <path d="M372 190 346 360M292 458l-30 42M498 450l36 12M278 490l30 44" stroke="#fff" strokeWidth="4" />
            <path d="M574 385q-16 30-22 100" stroke="#222" strokeWidth="5" strokeDasharray="18 8" />
            <path d="M292 305 380 175" stroke="#3a3ae0" strokeWidth="6" />
            <path d="M290 305 538 391" stroke="#d93030" strokeWidth="6" />
            <path d="M290 305 245 518" stroke="#27a527" strokeWidth="6" />
            <g fontSize="62" fontWeight="600" stroke="none">
                <text x="396" y="276" fontSize="46" fill="#222" fontStyle="italic" transform="rotate(18 396 276)">Front</text>
                <text x="308" y="448" fontSize="48" fill="#222" transform="rotate(17 308 448)">Bottom</text>
                <text x="374" y="176" fill="#3a3ae0">Z</text>
                <text x="560" y="428" fill="#d93030">X</text>
                <text x="216" y="578" fill="#27a527">Y</text>
            </g>
        </svg>
    );
}

function ProfileCondition({ label, magnitude, value }: { label: string; magnitude: string; value: string }) {
    return (
        <div className="pl-[14px]">
            <label className="block">
                <span className="block pl-2 text-[18px] leading-[30px] text-[#707070]">{label}</span>
                <span className="relative block">
                    <select className="block h-[33px] w-full appearance-none border-b border-[#d0d0d0] pt-[2px] pl-2 text-[21px] text-[#333]">
                        <option>Normal to profile</option>
                    </select>
                    <Caret className="absolute top-3 right-[9px]" />
                </span>
            </label>
            <label className="mt-[6px] flex h-[33px] items-center gap-2 pl-2">
                <span className="pt-[3px] text-[18px] whitespace-nowrap text-[#707070]">{magnitude}</span>
                <input defaultValue={value} className="h-[33px] min-w-0 flex-1 border-b border-[#d0d0d0] pt-[3px] pr-1 text-right text-[21px] text-[#333]" />
            </label>
        </div>
    );
}

function Check({ label }: { label: string }) {
    return (
        <label className="flex h-[41px] items-center gap-[6px] text-[20px]">
            <input type="checkbox" className="size-[18px] appearance-none rounded-[4px] border border-[#707070] bg-white checked:bg-[#1651b0]" />
            {label}
        </label>
    );
}

function LoftDialog() {
    const [kind, setKind] = useState('Solid');
    const [mode, setMode] = useState('Add');

    const kinds = [
        { name: 'Solid', width: 'w-[106px]' },
        { name: 'Surface', width: 'w-[124px]' },
        { name: 'Thin', width: 'flex-1' },
    ];
    const modes = [
        { name: 'New', width: 'w-[67px]' },
        { name: 'Add', width: 'w-[65px]' },
        { name: 'Remove', width: 'w-[96px]' },
        { name: 'Intersect', width: 'flex-1' },
    ];
    const tab = 'border-b-2 text-[18px]';
    const on = 'border-[#1651b0] font-bold text-[#1651b0]';
    const off = 'border-[#d8d8d8]';

    return (
        <section className="absolute top-[6px] left-0 w-[330px] bg-white/95 text-[#5f5f5f] shadow-[0_4px_16px_rgba(0,0,0,0.35)]">
            <div className="flex h-[42px] items-center pl-[9px] text-[#333]">
                <h2 className="flex-1 pt-px text-[19px] font-bold">Loft 1</h2>
                <button aria-label="Accept" className="flex size-[42px] items-center justify-center bg-[#009400]">
                    <svg viewBox="0 0 24 18" className="h-[18px] w-6" fill="none" stroke="white" strokeWidth="5"><path d="m2 8 7 7L22 2" /></svg>
                </button>
                <button aria-label="Cancel" className="flex size-[42px] items-center justify-center">
                    <svg viewBox="0 0 18 18" className="size-[18px]" fill="none" stroke="#c1272d" strokeWidth="5"><path d="m2 2 14 14M16 2 2 16" /></svg>
                </button>
            </div>
            <div className="flex h-[39px] border-t border-[#d8d8d8] text-[#444]">
                {kinds.map((k) => (
                    <button key={k.name} onClick={() => setKind(k.name)} className={`${tab} ${k.width} ${kind === k.name ? on : off}`}>{k.name}</button>
                ))}
            </div>
            <div className="flex h-[42px] text-[#444]">
                {modes.map((m) => (
                    <button key={m.name} onClick={() => setMode(m.name)} className={`pt-1 ${tab} ${m.width} ${mode === m.name ? on : off}`}>{m.name}</button>
                ))}
            </div>

            <div className="mx-[4px] mt-[11px] rounded-[3px] border border-[#1651b0] bg-[#def0fa]">
                <div className="flex h-[30px] items-center justify-between pt-1 pr-[15px] pl-2 text-[15px]">
                    Profiles
                    <svg viewBox="0 0 16 20" className="mt-1 h-5 w-4" fill="#8d979c" stroke="#8d979c">
                        <path d="M4 20V4M1 6l3-5 3 5zM12 0v16M9 14l3 5 3-5z" />
                    </svg>
                </div>
                {['Sketch 2', 'Sketch 3', 'Sketch 4'].map((name) => (
                    <div key={name} className="flex h-[44px] items-center border-b border-[#a9bcc8] pr-[14px] pl-[15px] text-[20px] last:border-0">
                        <Chevron className="size-[18px] -rotate-90" />
                        <span className="ml-[6px] flex-1">Faces of {name}</span>
                        <button aria-label={`Remove ${name}`}><X size={18} strokeWidth={2} /></button>
                    </div>
                ))}
            </div>

            <div className="mt-[10px] flex h-9 items-center gap-[12px] pl-[6px] text-[20px] text-[#707070]">
                <Chevron className="size-[18px]" />
                End conditions
            </div>
            <div className="mt-[2px] mr-[39px] ml-[14px] border-l-2 border-[#d8d8d8]">
                <div className="flex flex-col gap-[9px] pt-2">
                    <ProfileCondition label="Start profile condition" magnitude="Start magnitude" value="0.5" />
                    <ProfileCondition label="End profile condition" magnitude="End magnitude" value="1" />
                </div>
                <div className="-ml-2 h-px w-[15px] bg-[#d8d8d8]" />
            </div>
            <div className="pl-[6px]">
                <Check label="Guides and continuity" />
                <Check label="Path" />
                <div className="flex items-center gap-3">
                    <Chevron color="#ccc" className="size-[18px] -rotate-90" />
                    <Check label="Connections" />
                </div>
                <Check label="Show isocurves" />
                <Check label="Merge with all" />
            </div>
            <div className="mx-[4px] mt-[7px] flex h-16 flex-col justify-center rounded-[3px] border border-[#ccc] pr-[14px] pl-2">
                <span className="text-[15px] leading-7">Merge scope</span>
                <div className="flex items-center justify-between text-[20px] leading-8">
                    Funnel
                    <button aria-label="Remove Funnel"><X size={18} strokeWidth={2} /></button>
                </div>
            </div>
            <div className="flex h-[45px] items-center justify-between pt-[14px] pr-2 pl-[11px]">
                <input
                    type="range"
                    aria-label="Final"
                    defaultValue={71}
                    className="h-[3px] w-[168px] appearance-none bg-[#777] [&::-webkit-slider-thumb]:size-[17px] [&::-webkit-slider-thumb]:appearance-none [&::-webkit-slider-thumb]:rounded-full [&::-webkit-slider-thumb]:border [&::-webkit-slider-thumb]:border-[#666] [&::-webkit-slider-thumb]:bg-white"
                />
                <Glyph name="help" className="size-[18px] opacity-80" />
            </div>
        </section>
    );
}

export default function App() {
    return (
        <div className="flex h-screen flex-col overflow-hidden border-b-2 border-[#1f1e24] bg-white font-['Roboto',sans-serif] text-[#333]">
            <BrowserChrome />
            <DocHeader />
            <div className="flex min-h-0 flex-1">
                <nav className="flex w-[60px] shrink-0 flex-col items-center gap-[26px] border-t border-r border-[#d2d2d2] bg-[#fafafa] pt-3 pb-1">
                    {['tree', 'version', 'comment', 'notes', 'boxLock', 'timer'].map((name) => (
                        <button key={name} aria-label={name}><Glyph name={name} className="size-[27px]" /></button>
                    ))}
                    <button aria-label="Search" className="mt-auto"><Glyph name="search" /></button>
                </nav>
                <div className="flex min-w-0 flex-1 flex-col">
                    <Toolbar />
                    <div className="flex min-h-0 flex-1">
                        <FeaturePanel />
                        <main className="relative min-w-0 flex-1">
                            <Scene />
                            <div className="absolute top-[5px] right-0"><ViewCube /></div>
                            <button aria-label="Shading" className="absolute top-[221px] right-[29px] flex items-center gap-3">
                                <Glyph name="shaded" />
                                <Caret />
                            </button>
                            <div className="absolute top-[548px] right-0 flex flex-col divide-y divide-[#aaa] border border-r-0 border-[#aaa] bg-white">
                                {['swatch', 'tableBox', 'tableBraces', 'tableVar'].map((name) => (
                                    <button key={name} aria-label={name} className="flex h-[49px] w-[46px] items-center justify-center"><Glyph name={name} /></button>
                                ))}
                            </div>
                            <button aria-label="Measure" className="absolute right-[15px] bottom-[10px]"><Glyph name="measure" /></button>
                            <button aria-label="Feature list" className="absolute top-[622px] left-0 flex h-[50px] w-12 items-center justify-center border border-l-0 border-[#aaa]">
                                <Glyph name="list" />
                            </button>
                            <LoftDialog />
                        </main>
                    </div>
                    <footer className="flex h-[43px] bg-[#d6d6d6]">
                        <button aria-label="New tab" className="flex w-[59px] items-center justify-center pr-[10px]">
                            <Plus size={32} strokeWidth={3} color="#666" />
                        </button>
                        <button className="flex w-[300px] items-center gap-[5px] rounded-b-lg border-b-3 border-[#1651b0] bg-white pt-[2px] pl-[18px] text-[21px]">
                            <Glyph name="studio" className="size-[26px]" />
                            Part Studio 1
                        </button>
                    </footer>
                </div>
            </div>
        </div>
    );
}
